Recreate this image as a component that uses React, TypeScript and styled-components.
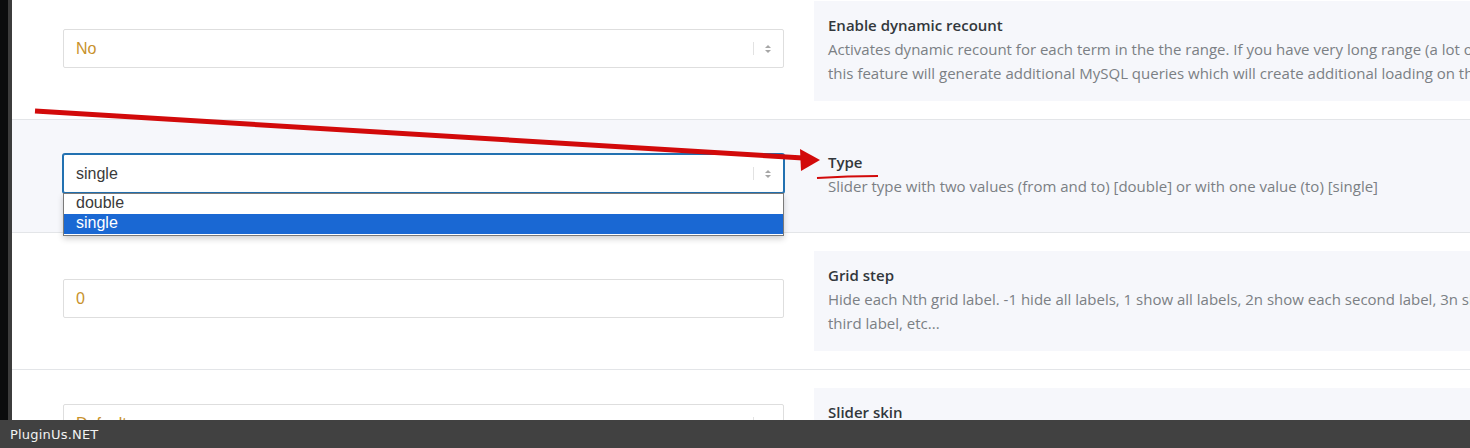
import React from "react";
import styled, { createGlobalStyle } from "styled-components";

const GlobalStyle = createGlobalStyle`
  html, body { margin: 0; padding: 0; background: #ffffff; }
  body { overflow: hidden; font-family: "Open Sans", "Noto Sans", sans-serif; }
  * { box-sizing: border-box; }
`;

const Page = styled.div`
  position: relative;
  width: 1470px;
  height: 448px;
  display: flex;
  flex-direction: column;
  overflow: hidden;
`;

const Viewport = styled.div`
  display: flex;
  height: 420px;
  overflow: hidden;
`;

const Edge = styled.div`
  width: 12px;
  flex-shrink: 0;
  background: #0b0c0d;
  border-right: 4px solid #3c3c3c;
`;

const Rows = styled.div`
  flex: 1;
  display: flex;
  flex-direction: column;
  margin-top: -17px;
`;

const Row = styled.div<{ $active?: boolean }>`
  display: flex;
  align-items: center;
  padding: 18px 0 18px 51px;
  border-bottom: 1px solid #e3e5e8;
  background: ${(p) => (p.$active ? "#f6f7fb" : "#ffffff")};
  flex-shrink: 0;
`;

const Control = styled.div`
  position: relative;
  width: 721px;
  flex-shrink: 0;
  margin-bottom: 5px;
`;

const Field = styled.div<{ $focused?: boolean; $muted?: boolean }>`
  position: relative;
  height: 39px;
  display: flex;
  align-items: center;
  padding-left: 12px;
  background: #ffffff;
  border: 1px solid ${(p) => (p.$focused ? "#2271b1" : "#dedede")};
  box-shadow: ${(p) => (p.$focused ? "0 0 0 1px #2271b1" : "none")};
  border-radius: 2px;
  font-family: "Liberation Sans", Arial, sans-serif;
  font-size: 16px;
  color: ${(p) => (p.$muted ? "#c8922c" : "#3a3a3a")};
`;

const Stepper = styled.div`
  position: absolute;
  right: 0;
  top: 0;
  bottom: 0;
  width: 30px;
  display: flex;
  align-items: center;
  justify-content: center;
  &::before {
    content: "";
    position: absolute;
    left: 0;
    top: 12px;
    bottom: 12px;
    width: 1px;
    background: #e2e2e2;
  }
`;

const Dropdown = styled.div`
  position: absolute;
  left: 0;
  right: 0;
  top: 100%;
  background: #ffffff;
  border: 1px solid #7a7a7a;
  box-shadow: 0 3px 6px rgba(0, 0, 0, 0.18);
  padding: 0 0 1px;
  z-index: 2;
`;

const Option = styled.div<{ $selected?: boolean }>`
  height: 20px;
  line-height: 18px;
  padding-left: 12px;
  font-family: "Liberation Sans", Arial, sans-serif;
  font-size: 16px;
  color: ${(p) => (p.$selected ? "#ffffff" : "#3a3a3a")};
  background: ${(p) => (p.$selected ? "#1a68d3" : "transparent")};
`;

const Info = styled.div`
  margin-left: 30px;
  width: 800px;
  flex-shrink: 0;
  background: #f6f7fb;
  padding: 12px 14px 16px;
`;

const Title = styled.div`
  font-size: 15px;
  font-weight: 600;
  line-height: 24px;
  color: #32373c;
  white-space: nowrap;
`;

const Desc = styled.div`
  font-size: 15px;
  line-height: 24px;
  color: #7b7f84;
  white-space: nowrap;
`;

const Footer = styled.div`
  height: 28px;
  flex-shrink: 0;
  background: #414141;
  display: flex;
  align-items: center;
  padding-left: 10px;
  font-family: "DejaVu Sans", sans-serif;
  font-size: 13px;
  letter-spacing: 0.2px;
  color: #f2f2f2;
`;

const Annotation = styled.svg`
  position: absolute;
  left: 0;
  top: 0;
  pointer-events: none;
  z-index: 5;
`;

const SelectArrows = () => (
  <svg width="8" height="12" viewBox="0 0 8 12">
    <path d="M1 5 L4 2 L7 5 Z" fill="#a6a6a6" />
    <path d="M1 7 L4 10 L7 7 Z" fill="#a6a6a6" />
  </svg>
);

export default function App() {
  return (
    <Page>
      <GlobalStyle />
      <Viewport>
        <Edge />
        <Rows>
          <Row>
            <Control>
              <Field $muted>
                No
                <Stepper>
                  <SelectArrows />
                </Stepper>
              </Field>
            </Control>
            <Info>
              <Title>Enable dynamic recount</Title>
              <Desc>
                Activates dynamic recount for each term in the the range. If you have very long range (a lot of terms)
                <br />
                this feature will generate additional MySQL queries which will create additional loading on the server.
              </Desc>
            </Info>
          </Row>
          <Row $active>
            <Control>
              <Field $focused>
                single
                <Stepper>
                  <SelectArrows />
                </Stepper>
              </Field>
              <Dropdown>
                <Option>double</Option>
                <Option $selected>single</Option>
              </Dropdown>
            </Control>
            <Info>
              <Title>Type</Title>
              <Desc>Slider type with two values (from and to) [double] or with one value (to) [single]</Desc>
            </Info>
          </Row>
          <Row>
            <Control>
              <Field $muted>0</Field>
            </Control>
            <Info>
              <Title>Grid step</Title>
              <Desc>
                Hide each Nth grid label. -1 hide all labels, 1 show all labels, 2n show each second label, 3n show each
                <br />
                third label, etc...
              </Desc>
            </Info>
          </Row>
          <Row>
            <Control>
              <Field $muted>
                Default
                <Stepper>
                  <SelectArrows />
                </Stepper>
              </Field>
            </Control>
            <Info>
              <Title>Slider skin</Title>
              <Desc>Slider skin. Choose one of the predefined designs.</Desc>
            </Info>
          </Row>
        </Rows>
      </Viewport>
      <Footer>PluginUs.NET</Footer>
      <Annotation width="1470" height="448" viewBox="0 0 1470 448">
        <path d="M35 111 L803 158" stroke="#d20a0a" strokeWidth="5" fill="none" />
        <path d="M820 160 L800 149 L801 171 Z" fill="#d20a0a" />
        <path d="M817 178 Q848 176 878 176" stroke="#d20a0a" strokeWidth="2" fill="none" />
      </Annotation>
    </Page>
  );
}
